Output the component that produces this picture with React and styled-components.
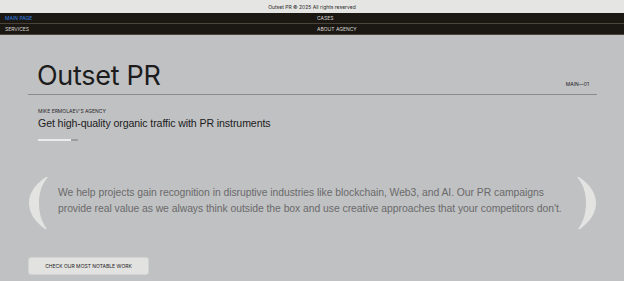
import styled, { createGlobalStyle } from "styled-components";

const Global = createGlobalStyle`
  html, body {
    margin: 0;
    padding: 0;
    background: #c0c1c3;
    font-family: Inter, "Liberation Sans", sans-serif;
  }
`;

const TopBar = styled.div`
  height: 13px;
  background: #e5e5e3;
  color: #2b2b2b;
  font-size: 5px;
  display: flex;
  align-items: center;
  justify-content: center;
`;

const Nav = styled.nav`
  background: #1b1814;
  display: grid;
  grid-template-columns: 1fr 1fr;
`;

const NavItem = styled.a`
  height: 10px;
  border-bottom: 1px solid #4a443a;
  padding-left: 5px;
  display: flex;
  align-items: center;
  font-size: 5px;
  text-transform: uppercase;
  color: ${(p) => (p.$active ? "#2f7fe0" : "#d8d6d0")};
  text-decoration: none;
`;

const Main = styled.main`
  padding: 0 27px 0 28px;
`;

const Header = styled.div`
  display: flex;
  justify-content: space-between;
  align-items: flex-end;
  border-bottom: 1px solid #8a8a8a;
  padding: 27px 8px 5px 9px;
`;

const Title = styled.h1`
  margin: 0;
  font-size: 27px;
  font-weight: 400;
  line-height: 1;
  letter-spacing: -0.3px;
  color: #1c1c1c;
`;

const Index = styled.span`
  font-size: 5px;
  color: #1c1c1c;
  margin-bottom: 2px;
`;

const Intro = styled.div`
  padding: 13px 0 0 10px;
`;

const Kicker = styled.div`
  font-size: 5px;
  color: #2a2a2a;
  text-transform: uppercase;
`;

const Lead = styled.p`
  margin: 3px 0 0;
  font-family: "Liberation Sans", Arial, sans-serif;
  font-size: 10.6px;
  letter-spacing: -0.1px;
  color: #1c1c1c;
`;

const Progress = styled.div`
  margin-top: 10px;
  width: 40px;
  height: 2px;
  background: #9d9d9f;
  display: flex;
`;

const ProgressFill = styled.div`
  width: 33px;
  background: #ececec;
`;

const Quote = styled.section`
  margin-top: 36px;
  display: flex;
  align-items: center;
`;

const QuoteText = styled.p`
  margin: 0 0 4px 0;
  flex: 1;
  padding: 0 8px 0 10px;
  font-family: "Liberation Sans", Arial, sans-serif;
  font-size: 10.4px;
  letter-spacing: -0.05px;
  line-height: 16px;
  color: #6a6a6a;
`;

const Button = styled.button`
  margin-top: 28px;
  width: 121px;
  height: 18px;
  background: #e2e2e1;
  border: 1px solid #d2d2d2;
  border-radius: 3px;
  font-family: inherit;
  font-size: 5px;
  color: #222;
  text-transform: uppercase;
  cursor: pointer;
`;

const Bracket = ({ flip }) => (
  <svg
    width="20"
    height="52"
    viewBox="0 0 20 52"
    style={flip ? { transform: "scaleX(-1)", flexShrink: 0 } : { flexShrink: 0 }}
  >
    <path
      d="M18 0 C6 8 1 17 1 26 C1 35 6 44 17 52 L19 52 C13 44 11 35 11 26 C11 17 13 8 20 0 Z"
      fill="#e3e3e2"
    />
  </svg>
);

export default function App() {
  return (
    <>
      <Global />
      <TopBar>Outset PR © 2025 All rights reserved</TopBar>
      <Nav>
        <NavItem $active>Main page</NavItem>
        <NavItem>Cases</NavItem>
        <NavItem>Services</NavItem>
        <NavItem>About agency</NavItem>
      </Nav>
      <Main>
        <Header>
          <Title>Outset PR</Title>
          <Index>MAIN—01</Index>
        </Header>
        <Intro>
          <Kicker>Mike Ermolaev's agency</Kicker>
          <Lead>Get high-quality organic traffic with PR instruments</Lead>
          <Progress>
            <ProgressFill />
          </Progress>
        </Intro>
        <Quote>
          <Bracket />
          <QuoteText>
            We help projects gain recognition in disruptive industries like
            blockchain, Web3, and AI. Our PR campaigns provide real value as we
            always think outside the box and use creative approaches that your
            competitors don't.
          </QuoteText>
          <Bracket flip />
        </Quote>
        <Button>Check our most notable work</Button>
      </Main>
    </>
  );
}
